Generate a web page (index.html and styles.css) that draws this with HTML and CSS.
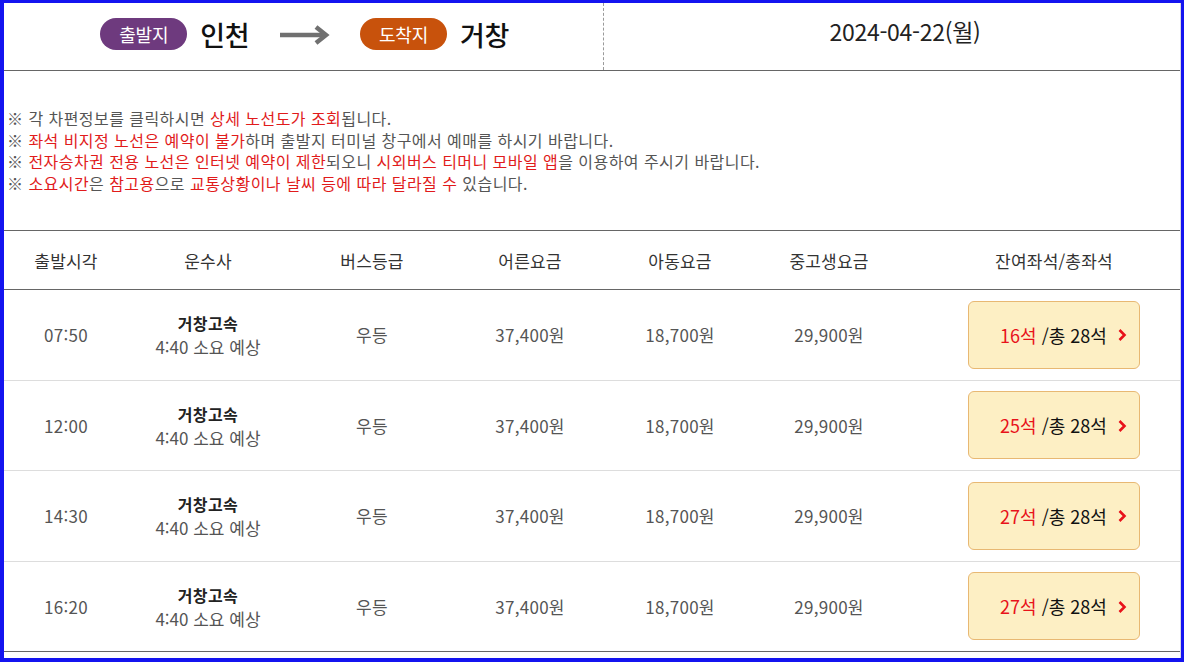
FILE: index.html
```html
<!DOCTYPE html>
<html lang="ko">
<head>
<meta charset="utf-8">
<link rel="stylesheet" href="styles.css">
</head>
<body>
<div class="frame">
  <div class="route">
    <div class="route-left">
      <span class="pill pill-dep">출발지</span>
      <span class="city">인천</span>
      <svg class="arrow" width="50" height="20" viewBox="0 0 50 20"><path d="M0 10 H44" stroke="#707070" stroke-width="4.5" fill="none"/><path d="M36 2 L46 10 L36 18" stroke="#707070" stroke-width="4.5" fill="none" stroke-linejoin="miter"/></svg>
      <span class="pill pill-arr">도착지</span>
      <span class="city">거창</span>
    </div>
    <div class="route-right">2024-04-22(월)</div>
  </div>

  <div class="notice">
    <p>※ 각 차편정보를 클릭하시면 <em>상세 노선도가 조회</em>됩니다.</p>
    <p>※ <em>좌석 비지정 노선은 예약이 불가</em>하며 출발지 터미널 창구에서 예매를 하시기 바랍니다.</p>
    <p>※ <em>전자승차권 전용 노선은 인터넷 예약이 제한</em>되오니 <em>시외버스 티머니 모바일 앱</em>을 이용하여 주시기 바랍니다.</p>
    <p>※ <em>소요시간</em>은 <em>참고용</em>으로 <em>교통상황이나 날씨 등에 따라 달라질 수</em> 있습니다.</p>
  </div>

  <div class="table">
    <div class="thead">
      <div>출발시각</div><div>운수사</div><div>버스등급</div><div>어른요금</div><div>아동요금</div><div>중고생요금</div><div class="c7">잔여좌석/총좌석</div>
    </div>
    <div class="row">
      <div>07:50</div>
      <div class="co"><b>거창고속</b><span>4:40 소요 예상</span></div>
      <div>우등</div><div>37,400원</div><div>18,700원</div><div>29,900원</div>
      <div class="c7"><a class="seat"><span class="red">16석</span>&nbsp;/총 28석<svg class="chev" width="10" height="14" viewBox="0 0 10 14"><path d="M2.5 2 L7.5 7 L2.5 12" stroke="#e8121a" stroke-width="2.6" fill="none"/></svg></a></div>
    </div>
    <div class="row">
      <div>12:00</div>
      <div class="co"><b>거창고속</b><span>4:40 소요 예상</span></div>
      <div>우등</div><div>37,400원</div><div>18,700원</div><div>29,900원</div>
      <div class="c7"><a class="seat"><span class="red">25석</span>&nbsp;/총 28석<svg class="chev" width="10" height="14" viewBox="0 0 10 14"><path d="M2.5 2 L7.5 7 L2.5 12" stroke="#e8121a" stroke-width="2.6" fill="none"/></svg></a></div>
    </div>
    <div class="row">
      <div>14:30</div>
      <div class="co"><b>거창고속</b><span>4:40 소요 예상</span></div>
      <div>우등</div><div>37,400원</div><div>18,700원</div><div>29,900원</div>
      <div class="c7"><a class="seat"><span class="red">27석</span>&nbsp;/총 28석<svg class="chev" width="10" height="14" viewBox="0 0 10 14"><path d="M2.5 2 L7.5 7 L2.5 12" stroke="#e8121a" stroke-width="2.6" fill="none"/></svg></a></div>
    </div>
    <div class="row last">
      <div>16:20</div>
      <div class="co"><b>거창고속</b><span>4:40 소요 예상</span></div>
      <div>우등</div><div>37,400원</div><div>18,700원</div><div>29,900원</div>
      <div class="c7"><a class="seat"><span class="red">27석</span>&nbsp;/총 28석<svg class="chev" width="10" height="14" viewBox="0 0 10 14"><path d="M2.5 2 L7.5 7 L2.5 12" stroke="#e8121a" stroke-width="2.6" fill="none"/></svg></a></div>
    </div>
  </div>
</div>
</body>
</html>
```

FILE: styles.css
```css
* { box-sizing: border-box; }
html, body { margin: 0; padding: 0; }
body {
  width: 1184px;
  height: 662px;
  overflow: hidden;
  background: #1414f0;
  font-family: "Noto Sans CJK KR", "Noto Sans", sans-serif;
  color: #333;
}
.frame {
  margin: 3px 3px 0 4px;
  height: 655px;
  background: #fff;
  border-right: 1px solid #d8d8e0;
  overflow: hidden;
}
.route {
  display: flex;
  height: 68px;
  border-bottom: 1px solid #666;
}
.route-left {
  width: 600px;
  border-right: 1px dashed #9a9a9a;
  display: flex;
  align-items: center;
  justify-content: center;
  padding: 0 0 5px 2px;
}
.pill {
  display: inline-block;
  height: 32px;
  line-height: 32px;
  padding: 0 19px;
  border-radius: 16px;
  color: #fff;
  font-size: 18px;
  letter-spacing: -0.2px;
}
.pill-dep { background: #6e3a7e; }
.pill-arr { background: #c8520c; }
.city {
  font-size: 27px;
  font-weight: 500;
  color: #111;
  margin-left: 13px;
  letter-spacing: -0.5px;
}
.arrow { margin: 2px 30px 0 31px; }
.route-right {
  flex: 1;
  text-align: center;
  padding: 11px 0 0 26px;
  font-size: 23px;
  color: #222;
  letter-spacing: -0.3px;
}
.notice {
  padding: 37px 0 36px 3px;
  font-size: 16px;
  color: #555;
  letter-spacing: 0.45px;
}
.notice p { margin: 0; line-height: 21.5px; }
.notice em { font-style: normal; color: #e11b1b; }
.table {
  border-top: 1px solid #666;
}
.thead, .row {
  display: grid;
  grid-template-columns: 124px 160px 168px 148px 152px 146px 1fr;
  align-items: center;
  text-align: center;
}
.thead {
  height: 59px;
  border-bottom: 1px solid #666;
  font-size: 17px;
  color: #333;
  letter-spacing: 0.2px;
}
.row {
  height: 90.5px;
  border-bottom: 1px solid #ddd;
  font-size: 17px;
  color: #555;
  letter-spacing: 0.3px;
}
.row.last { border-bottom: 1px solid #666; }
.c7 { padding-left: 26px; }
.co { display: flex; flex-direction: column; line-height: 24px; margin-top: 1px; }
.co b { font-weight: 700; color: #222; font-size: 16px; letter-spacing: 0.4px; }
.co span { color: #555; letter-spacing: 0; }
.seat {
  display: inline-flex;
  align-items: center;
  justify-content: center;
  width: 172px;
  height: 68px;
  padding-left: 20px;
  background: #fdefc4;
  border: 1px solid #e8b873;
  border-radius: 6px;
  color: #111;
  font-size: 18px;
  font-weight: 400;
  letter-spacing: 0;
  margin-left: -1px;
}
.seat .red { color: #e8121a; }
.chev { margin-left: 10px; margin-top: 1px; }
```
